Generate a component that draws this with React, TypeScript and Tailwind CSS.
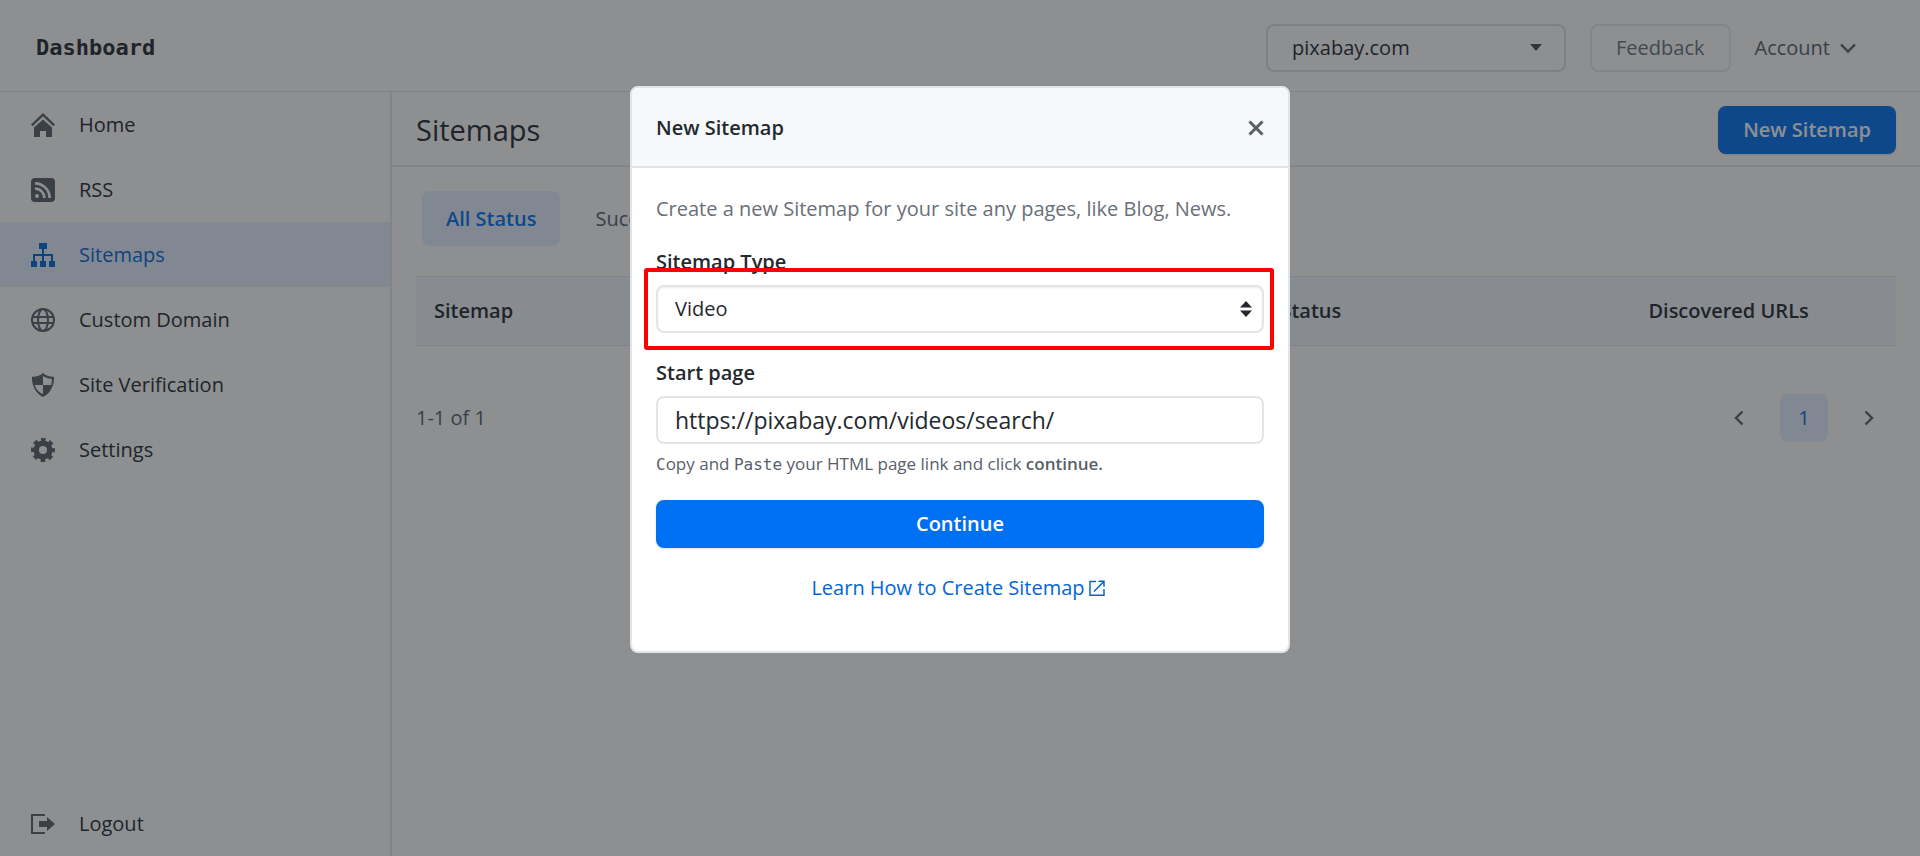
import React from 'react';

type IconProps = { className?: string };

const HomeIcon = () => (
  <svg viewBox="0 0 24 24" className="size-6" fill="currentColor" aria-hidden="true">
    <path d="M0.8 12.4 12 1.6l11.2 10.8" fill="none" stroke="currentColor" strokeWidth="2.2" />
    <path d="M3 14.6 12 6.4l9 8.2V24h-6v-6H9v6H3z" />
  </svg>
);

const RssIcon = () => (
  <svg viewBox="0 0 24 24" className="size-6" aria-hidden="true">
    <path
      fillRule="evenodd"
      fill="currentColor"
      d="M4 0h16a4 4 0 0 1 4 4v16a4 4 0 0 1-4 4H4a4 4 0 0 1-4-4V4a4 4 0 0 1 4-4zM4 4v2.7A13.3 13.3 0 0 1 17.3 20H20A16 16 0 0 0 4 4zm0 5.3V12a8 8 0 0 1 8 8h2.7A10.7 10.7 0 0 0 4 9.3zM6 16a2 2 0 1 0 0 4 2 2 0 0 0 0-4z"
    />
  </svg>
);

const SitemapIcon = () => (
  <svg viewBox="0 0 24 24" className="size-6" fill="currentColor" aria-hidden="true">
    <path d="M8 0h8v6h-3v5h9v7h2v6h-6v-6h2v-5h-7v5h2v6H9v-6h2v-5H4v5h2v6H0v-6h2v-7h9V6H8z" />
  </svg>
);

const GlobeIcon = () => (
  <svg viewBox="0 0 24 24" className="size-6" fill="none" stroke="currentColor" strokeWidth="2" aria-hidden="true">
    <circle cx="12" cy="12" r="11" />
    <ellipse cx="12" cy="12" rx="5" ry="11" />
    <path d="M1.5 9h21M1.5 15h21" />
  </svg>
);

const ShieldIcon = () => (
  <svg viewBox="0 0 24 24" className="size-6" aria-hidden="true">
    <path fill="currentColor" d="M1 3.8C5 4.2 9 2.8 12 0c3 2.8 7 4.2 11 3.8C23.5 12 19.5 20.5 12 24 4.5 20.5.5 12 1 3.8z" />
    <path fill="#ffffff" d="M3.6 12H12v9.3C7.8 19.3 4.8 16 3.6 12zM12 2.9c2.7 1.900 5.700 2.800 8.900 2.900 0 2.200-.1 4.200-.6 6.200H12z" />
  </svg>
);

const CogIcon = () => (
  <svg viewBox="0 0 24 24" className="size-6" aria-hidden="true">
    <g fill="none" stroke="currentColor">
      <circle cx="12" cy="12" r="6.8" strokeWidth="5.6" />
      <circle cx="12" cy="12" r="10" strokeWidth="4" strokeDasharray="4.4 3.454" strokeDashoffset="2.2" />
    </g>
  </svg>
);

const LogoutIcon = () => (
  <svg viewBox="0 0 24 24" className="size-6" fill="currentColor" aria-hidden="true">
    <path d="M0 2h14v2H2v16h12v2H0z" />
    <path d="M8 9h8V5l8 7-8 7v-4H8z" />
  </svg>
);

const Chevron = ({ className }: IconProps) => (
  <svg viewBox="0 0 16 16" className={className} fill="none" stroke="currentColor" strokeWidth="2.4" aria-hidden="true">
    <path d="m1 4.5 7 7 7-7" />
  </svg>
);

const PageArrow = ({ className }: IconProps) => (
  <svg viewBox="0 0 10 16" className={className} fill="none" stroke="currentColor" strokeWidth="2.4" aria-hidden="true">
    <path d="M8.5 1.5 2 8l6.5 6.5" />
  </svg>
);

const CloseIcon = () => (
  <svg viewBox="0 0 16 16" className="size-4" fill="none" stroke="currentColor" strokeWidth="3" aria-hidden="true">
    <path d="m1.5 1.5 13 13m0-13-13 13" />
  </svg>
);

const ExternalIcon = () => (
  <svg viewBox="0 0 16 16" className="size-4" fill="none" stroke="currentColor" strokeWidth="1.5" aria-hidden="true">
    <path d="M7 1.5H1v13.7h14V9M9.5 1.2H15v5.5M15 1.2 5 11.5" />
  </svg>
);

const nav = [
  { label: 'Home', icon: <HomeIcon /> },
  { label: 'RSS', icon: <RssIcon /> },
  { label: 'Sitemaps', icon: <SitemapIcon />, active: true },
  { label: 'Custom Domain', icon: <GlobeIcon /> },
  { label: 'Site Verification', icon: <ShieldIcon /> },
  { label: 'Settings', icon: <CogIcon /> },
];

type NavItemProps = { label: string; icon: React.ReactNode; active?: boolean };

const NavItem = ({ label, icon, active }: NavItemProps) => (
  <a
    href="#"
    aria-current={active ? 'page' : undefined}
    className={
      active
        ? 'flex h-[65px] items-center gap-6 bg-[#e7f1ff] pl-[31px] text-[#0366d6]'
        : 'flex h-[65px] items-center gap-6 pl-[31px] text-[#24292e]'
    }
  >
    <span className={active ? 'text-[#0366d6]' : 'text-[#586069]'}>{icon}</span>
    <span>{label}</span>
  </a>
);

const Header = () => (
  <header className="flex h-[92px] items-center justify-between border-b border-[#e1e4e8] pt-1 pr-16 pl-9">
    <div className="font-['DejaVu_Sans_Mono',monospace] text-[22px] font-bold text-[#24292e]">Dashboard</div>
    <div className="flex items-center gap-6">
      <div className="relative w-[300px]">
        <select
          aria-label="Site"
          className="h-12 w-full appearance-none rounded-lg border-2 border-[#dfe2e5] bg-white pl-6 text-[#24292e]"
        >
          <option>pixabay.com</option>
        </select>
        <svg viewBox="0 0 12 7" className="pointer-events-none absolute top-5 right-6 h-[7px] w-3" fill="#444d56" aria-hidden="true">
          <path d="M0 0h12L6 7z" />
        </svg>
      </div>
      <button className="h-12 rounded-lg border-2 border-[#eaecef] px-6 text-[#6a737d]">Feedback</button>
      <button className="flex items-center gap-2.5 text-[#586069]">
        Account
        <Chevron className="size-4" />
      </button>
    </div>
  </header>
);

const SitemapsPage = () => (
  <main className="flex-1">
    <div className="flex h-[75px] items-center justify-between border-b-2 border-[#e6e8ef] px-6 pt-0.5">
      <h1 className="text-[29px] text-[#24292e]">Sitemaps</h1>
      <button className="h-12 rounded-lg bg-[#0070f3] px-[25px] font-semibold text-white shadow-sm">New Sitemap</button>
    </div>
    <div className="px-6 pt-6">
      <div className="flex pl-1.5">
        <button className="h-[55px] rounded-lg bg-[#e7f1ff] px-6 font-semibold text-[#0070f3]">All Status</button>
        <button className="h-[55px] px-[35px] text-[#586069]">Success</button>
      </div>
      <table className="mt-[30px] w-full table-fixed text-left">
        <thead>
          <tr className="h-[69px] border-y border-[#e1e8ee] bg-[#f4f9fc] text-[#24292e]">
            <th className="w-[58%] pl-[18px] font-semibold">Sitemap</th>
            <th className="w-[25%] pl-[6px] font-semibold">Status</th>
            <th className="w-[17%] pl-1 font-semibold">Discovered URLs</th>
          </tr>
        </thead>
      </table>
      <div className="mt-12 flex items-center justify-between">
        <span className="text-[#586069]">1-1 of 1</span>
        <nav aria-label="Pagination" className="flex items-center gap-9 pr-[22px] text-[#586069]">
          <button aria-label="Previous page">
            <PageArrow className="h-4 w-2.5" />
          </button>
          <button className="size-12 rounded-lg bg-[#e7f1ff] text-[#0366d6]">1</button>
          <button aria-label="Next page">
            <PageArrow className="h-4 w-2.5 rotate-180" />
          </button>
        </nav>
      </div>
    </div>
  </main>
);

const NewSitemapDialog = () => (
  <div className="fixed inset-0 flex items-start justify-center bg-[#1b1f23]/50 pt-[86px]">
    <div
      role="dialog"
      aria-modal="true"
      aria-labelledby="dialog-title"
      className="w-[660px] rounded-lg border-2 border-[#e1e4e8] bg-white text-[#24292e]"
    >
      <div className="flex h-20 items-center justify-between rounded-t-md border-b-2 border-[#e1e4e8] bg-[#f6f8fa] px-6 pt-0.5">
        <h2 id="dialog-title" className="font-semibold">New Sitemap</h2>
        <button aria-label="Close" className="text-[#586069]">
          <CloseIcon />
        </button>
      </div>
      <form className="flex flex-col px-6 pt-[26px] pb-12" onSubmit={(event) => event.preventDefault()}>
        <p className="text-[#6a6f78]">Create a new Sitemap for your site any pages, like Blog, News.</p>
        <label htmlFor="sitemap-type" className="mt-[23px] font-semibold">Sitemap Type</label>
        <div className="relative mt-2">
          <select
            id="sitemap-type"
            defaultValue="Video"
            className="h-12 w-full appearance-none rounded-lg border-2 border-[#e1e4e8] bg-white pl-[17px] shadow-[inset_0_1px_2px_rgba(27,31,35,0.075)]"
          >
            <option>Video</option>
          </select>
          <svg viewBox="0 0 12 16" className="pointer-events-none absolute top-4 right-3 h-4 w-3" fill="#24292e" aria-hidden="true">
            <path d="M6 0l6 6.5H0zM0 9.5h12L6 16z" />
          </svg>
          <div className="pointer-events-none absolute -top-[17px] -right-2.5 -bottom-[17px] -left-3 rounded-[3px] border-4 border-[#ff0000]" />
        </div>
        <label htmlFor="start-page" className="mt-[25px] font-semibold">Start page</label>
        <input
          id="start-page"
          type="text"
          defaultValue="https://pixabay.com/videos/search/"
          className="mt-2 h-12 rounded-lg border-2 border-[#e1e4e8] px-[17px] text-[23px]"
        />
        <p className="mt-2 text-[17px] leading-6 text-[#586069]">
          <span className="font-['DejaVu_Sans_Mono',monospace] text-base">C</span>opy and{' '}
          <span className="font-['DejaVu_Sans_Mono',monospace] text-base">Paste</span> your HTML page link and click{' '}
          <strong className="font-semibold">continue.</strong>
        </p>
        <button className="mt-[23px] h-12 rounded-lg bg-[#0070f3] font-semibold text-white shadow-sm">Continue</button>
        <a href="#" className="mt-[25px] flex items-center justify-center gap-1 pr-1 text-[#0366d6]">
          Learn How to Create Sitemap
          <ExternalIcon />
        </a>
      </form>
    </div>
  </div>
);

export default function App() {
  return (
    <div className="flex min-h-screen flex-col bg-white font-['Open_Sans','Noto_Sans',sans-serif] text-[20px] leading-[30px]">
      <Header />
      <div className="flex flex-1">
        <aside className="flex w-[392px] flex-col justify-between border-r-2 border-[#e6e8ef]">
          <nav aria-label="Main">
            {nav.map((item) => (
              <NavItem key={item.label} {...item} />
            ))}
          </nav>
          <NavItem label="Logout" icon={<LogoutIcon />} />
        </aside>
        <SitemapsPage />
      </div>
      <NewSitemapDialog />
    </div>
  );
}
